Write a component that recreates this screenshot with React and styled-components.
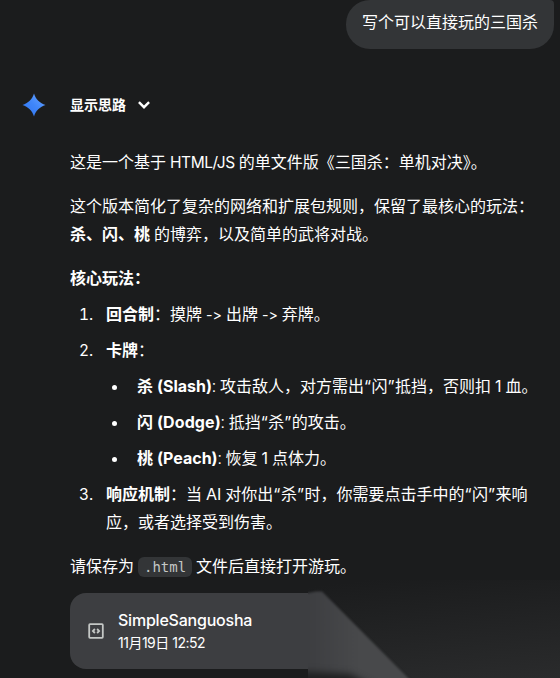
import React from 'react';
import styled, { createGlobalStyle } from 'styled-components';

const GlobalStyle = createGlobalStyle`
  * {
    box-sizing: border-box;
  }
  body {
    margin: 0;
    background: #1b1c1d;
    overflow: hidden;
  }
`

const Page = styled.div`
  position: relative;
  width: 560px;
  height: 678px;
  overflow: hidden;
  background: #1b1c1d;
  color: #fff;
  font-family: Roboto, "Noto Sans CJK SC", sans-serif;
  font-size: 16px;
  line-height: 28px;
`

const UserRow = styled.div`
  display: flex;
  justify-content: flex-end;
  padding-right: 6px;
`

const Bubble = styled.div`
  height: 49px;
  padding: 9px 16px 0;
  border-radius: 24px 4px 24px 24px;
  background: #333537;
`

const Thoughts = styled.div`
  display: flex;
  align-items: center;
  height: 32px;
  margin-top: 40px;
  padding-left: 22px;
  font-size: 14px;
  font-weight: 700;
`

const ThoughtsLabel = styled.span`
  margin: 0 12px 0 24px;
`

const Answer = styled.div`
  padding: 28px 16px 0 70px;
`

const Paragraph = styled.p`
  margin: 0 0 16px;
  white-space: nowrap;
`

const Heading = styled(Paragraph)`
  margin-bottom: 8px;
  font-weight: 700;
`

const List = styled.ol`
  display: flex;
  flex-direction: column;
  gap: 8px;
  margin: 0 0 16px;
  padding: 0;
  list-style: none;
`

const Item = styled.li`
  display: grid;
  grid-template-columns: ${(props) => (props.$nested ? '31px' : '36px')} 1fr;
  white-space: nowrap;
`

const Number = styled.span`
  padding-left: 9px;
  font-family: Inter, sans-serif;
  font-size: 15.5px;
  font-variant-numeric: tabular-nums;
`

const Dot = styled.span`
  width: 5px;
  height: 5px;
  margin: 12px 0 0 6px;
  border-radius: 50%;
  background: #fff;
`

const SubList = styled(List)`
  margin: 8px 0 0;
`

// latin runs inside the chinese text
const Latin = styled.span`
  font-family: Inter, sans-serif;
  font-size: ${(props) => props.$size || 16}px;
  font-feature-settings: "calt" 0;
  letter-spacing: ${(props) => props.$track || 0}px;
  line-height: 1;
`

const Quote = styled(Latin)`
  letter-spacing: 0.5px;
`

const Code = styled.code`
  display: inline-block;
  height: 20px;
  padding: 0 6px;
  border-radius: 6px;
  background: #333537;
  color: #c4c7c5;
  font-family: "DejaVu Sans Mono", "Liberation Mono", monospace;
  font-size: 14px;
  line-height: 20px;
`

const Card = styled.div`
  display: flex;
  align-items: center;
  width: 238px;
  height: 76px;
  margin-top: -4px;
  padding-left: 18px;
  border-radius: 16px 0 0 16px;
  background: #3d3e41;
`

const CardText = styled.div`
  display: flex;
  flex-direction: column;
  margin-left: 14px;
`

const CardTitle = styled.span`
  height: 24px;
  font-family: Inter, sans-serif;
  font-weight: 500;
  letter-spacing: -0.22px;
  line-height: 22px;
`

const CardDate = styled.span`
  height: 20px;
  font-family: Inter, "Noto Sans CJK SC", sans-serif;
  font-size: 14px;
  letter-spacing: -0.5px;
  line-height: 20px;
`

const Glow = styled.svg`
  position: absolute;
  left: 308px;
  top: 580px;
`

const Shade = styled.div`
  position: absolute;
  right: 0;
  bottom: 0;
  width: 252px;
  height: 98px;
  background: linear-gradient(174deg, #1b1c1d 5%, #2a2b2c 100%);
`

const Spark = () => (
  <svg width="24" height="24" viewBox="0 0 24 24">
    <defs>
      <linearGradient id="spark" x1="0" y1="1" x2="1" y2="0">
        <stop offset="0" stopColor="#2f72ee" />
        <stop offset="0.5" stopColor="#3f86fa" />
        <stop offset="1" stopColor="#6ba6ff" />
      </linearGradient>
    </defs>
    <path fill="url(#spark)" d="M12 .5C13.6 6 18 10.4 23.5 12 18 13.6 13.6 18 12 23.5 10.4 18 6 13.6.5 12 6 10.4 10.4 6 12 .5Z" />
  </svg>
)

const Chevron = () => (
  <svg width="12" height="8" viewBox="0 0 12 8" fill="none" stroke="#fff" strokeWidth="2.4">
    <path d="M.9 1.2 6 6.2 11.1 1.2" />
  </svg>
)

const CodeIcon = () => (
  <svg width="16" height="16" viewBox="0 0 16 16" fill="none" stroke="#c4c7c5" strokeWidth="1.8">
    <rect x="1.2" y="1.2" width="13.6" height="13.6" rx=".8" />
    <path d="M6.9 6 4.9 8l2 2M9.1 6l2 2-2 2" />
  </svg>
)

const App = () => {
  return (
    <Page>
      <GlobalStyle />
      <UserRow>
        <Bubble>写个可以直接玩的三国杀</Bubble>
      </UserRow>
      <Thoughts>
        <Spark />
        <ThoughtsLabel>显示思路</ThoughtsLabel>
        <Chevron />
      </Thoughts>
      <Answer>
        <Paragraph>这是一个基于 <Latin $size={15.5} $track={-0.42}>HTML/JS</Latin> 的单文件版《三国杀：单机对决》。</Paragraph>
        <Paragraph>
          这个版本简化了复杂的网络和扩展包规则，保留了最核心的玩法：<br />
          <b>杀、闪、桃</b> 的博弈，以及简单的武将对战。
        </Paragraph>
        <Heading>核心玩法：</Heading>
        <List>
          <Item>
            <Number>1.</Number>
            <div><b>回合制</b>：摸牌 <Latin $size={14.2}>-&gt;</Latin> 出牌 <Latin $size={14.2}>-&gt;</Latin> 弃牌。</div>
          </Item>
          <Item>
            <Number>2.</Number>
            <div>
              <b>卡牌</b>：
              <SubList as="ul">
                <Item $nested>
                  <Dot />
                  <div><b>杀 <Latin>(Slash)</Latin></b>: 攻击敌人，对方需出<Quote>“</Quote>闪<Quote>”</Quote>抵挡，否则扣 <Latin>1</Latin> 血。</div>
                </Item>
                <Item $nested>
                  <Dot />
                  <div><b>闪 <Latin $track={0.1}>(Dodge)</Latin></b>: 抵挡<Quote>“</Quote>杀<Quote>”</Quote>的攻击。</div>
                </Item>
                <Item $nested>
                  <Dot />
                  <div><b>桃 <Latin>(Peach)</Latin></b>: 恢复 <Latin>1</Latin> 点体力。</div>
                </Item>
              </SubList>
            </div>
          </Item>
          <Item>
            <Number>3.</Number>
            <div>
              <b>响应机制</b>：当 <Latin>AI</Latin> 对你出<Quote>“</Quote>杀<Quote>”</Quote>时，你需要点击手中的<Quote>“</Quote>闪<Quote>”</Quote>来响<br />
              应，或者选择受到伤害。
            </div>
          </Item>
        </List>
        <Paragraph>请保存为 <Code>.html</Code> 文件后直接打开游玩。</Paragraph>
        <Card>
          <CodeIcon />
          <CardText>
            <CardTitle>SimpleSanguosha</CardTitle>
            <CardDate>11月19日 12:52</CardDate>
          </CardText>
        </Card>
      </Answer>
      <Shade />
      <Glow width="112" height="98" viewBox="8 0 112 98">
        <defs>
          <linearGradient id="edge" gradientUnits="userSpaceOnUse" x1="8" x2="60" y1="0" y2="0">
            <stop offset="0" stopColor="#3d3e41" />
            <stop offset="1" stopColor="#48494b" />
          </linearGradient>
          <filter id="soft" x="-20%" y="-20%" width="140%" height="140%" colorInterpolationFilters="sRGB">
            <feGaussianBlur stdDeviation="1" />
          </filter>
          <filter id="wide" x="-30%" y="-80%" width="160%" height="260%" colorInterpolationFilters="sRGB">
            <feGaussianBlur stdDeviation="3.5" />
          </filter>
        </defs>
        <path fill="url(#edge)" filter="url(#soft)" d="M-10 13H8L16 11.5H22L118 108H-10Z" />
        <path fill="#1f2021" filter="url(#wide)" d="M-20 92H14L50 94 86 112H-20Z" />
      </Glow>
    </Page>
  )
}

export default App
